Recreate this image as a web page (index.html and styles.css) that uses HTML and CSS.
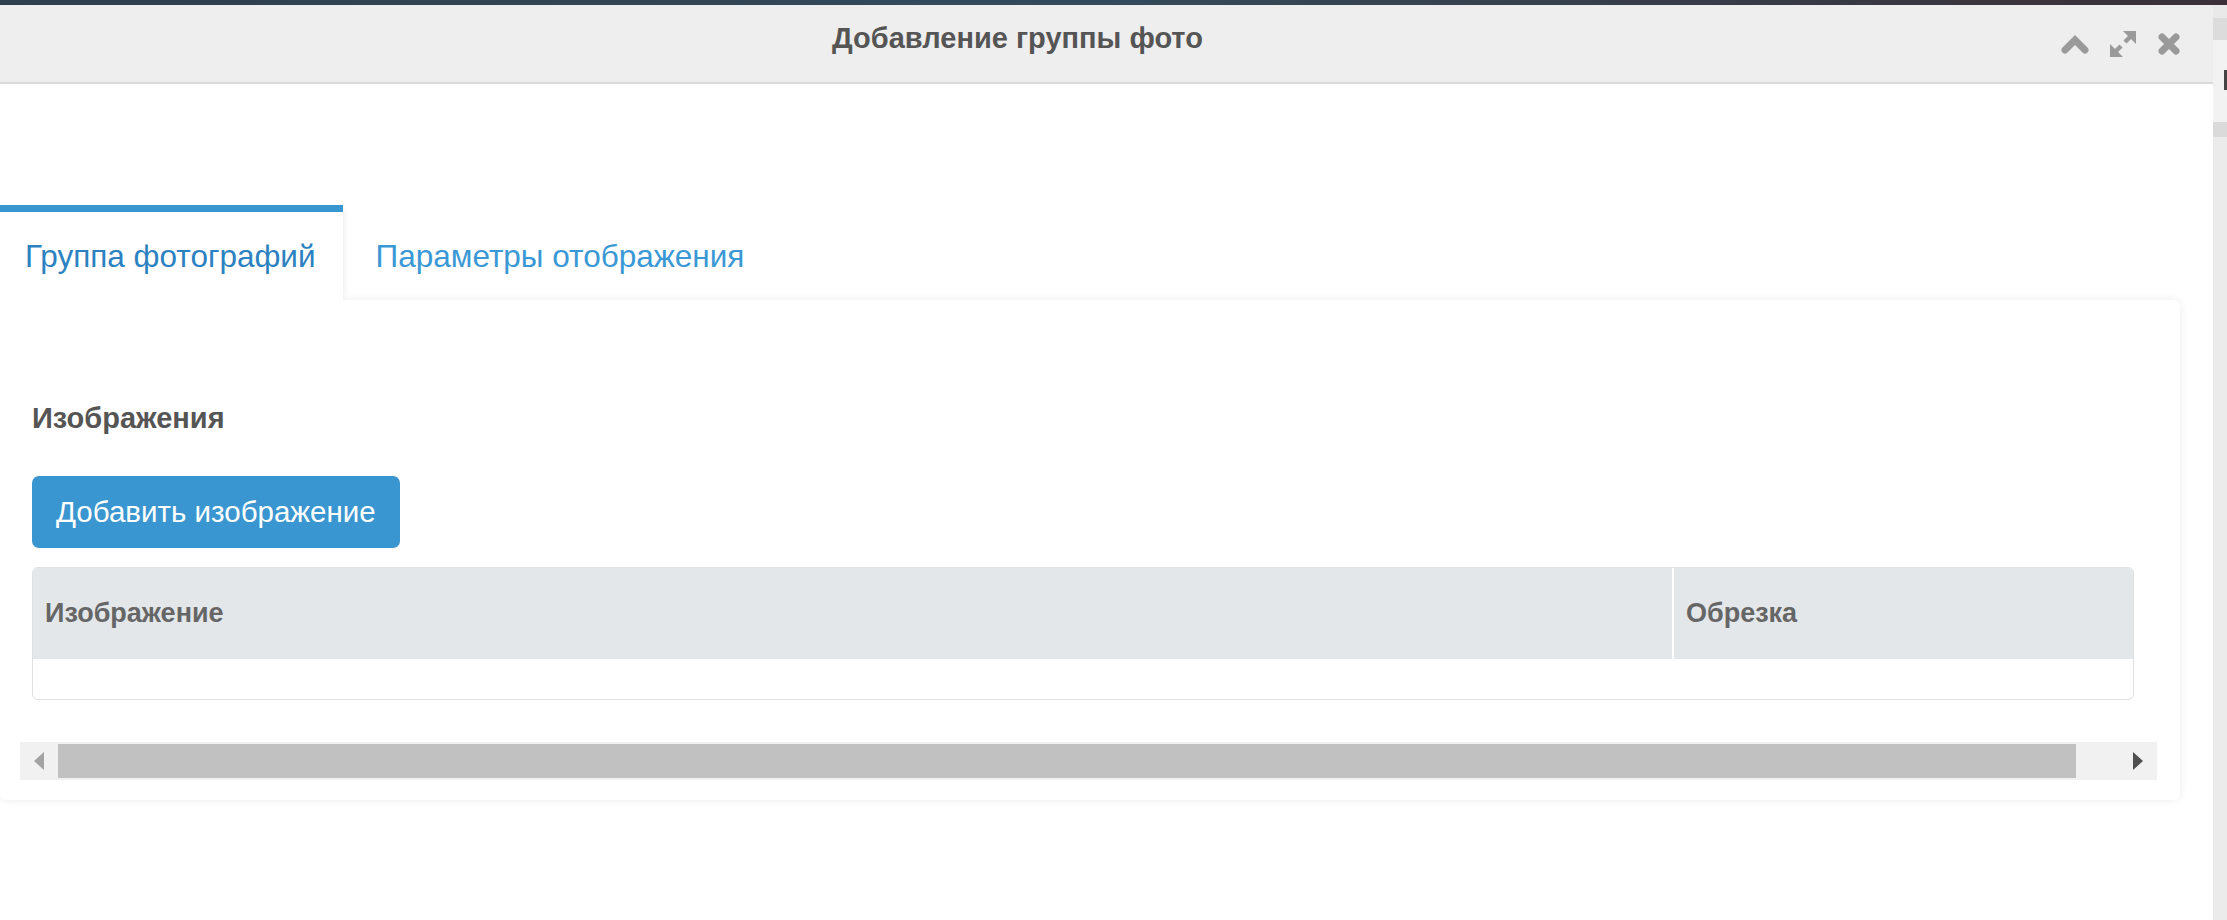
FILE: index.html
```html
<!DOCTYPE html>
<html lang="ru">
<head>
  <meta charset="UTF-8">
  <meta name="viewport" content="width=device-width, initial-scale=1.0">
  <title>Добавление группы фото</title>
  <link rel="stylesheet" href="styles.css">
</head>
<body>

  <div class="topbar"></div>

  <div class="stage">
    <div class="dialog">
      <div class="dialog-header">
        <div class="dialog-title">Добавление группы фото</div>
        <div class="dialog-controls">
          <!-- collapse -->
          <svg class="ctrl" width="28" height="20" viewBox="0 0 28 20">
            <path d="M4 16 L14 6 L24 16" fill="none" stroke="#9a9a9a" stroke-width="7" stroke-linecap="round" stroke-linejoin="miter"/>
          </svg>
          <!-- maximize -->
          <svg class="ctrl" width="28" height="28" viewBox="0 0 28 28">
            <polygon points="14,1 27,1 27,14" fill="#9a9a9a"/>
            <line x1="22" y1="6" x2="16" y2="12" stroke="#9a9a9a" stroke-width="4.5"/>
            <polygon points="1,14 1,27 14,27" fill="#9a9a9a"/>
            <line x1="6" y1="22" x2="12" y2="16" stroke="#9a9a9a" stroke-width="4.5"/>
          </svg>
          <!-- close -->
          <svg class="ctrl" width="24" height="22" viewBox="0 0 24 22">
            <path d="M5 4 L19 18 M19 4 L5 18" fill="none" stroke="#9a9a9a" stroke-width="7" stroke-linecap="round"/>
          </svg>
        </div>
      </div>

      <div class="dialog-body">
        <ul class="tabs">
          <li class="tab active">Группа фотографий</li>
          <li class="tab">Параметры отображения</li>
        </ul>

        <div class="tab-panel">
          <div class="panel-inner">
            <h3 class="section-title">Изображения</h3>
            <button class="btn-add">Добавить изображение</button>

            <div class="table-wrap">
              <table class="images-table">
                <colgroup>
                  <col class="col-image">
                  <col>
                </colgroup>
                <thead>
                  <tr>
                    <th>Изображение</th>
                    <th>Обрезка</th>
                  </tr>
                </thead>
                <tbody>
                  <tr>
                    <td></td>
                    <td></td>
                  </tr>
                </tbody>
              </table>
            </div>
          </div>

          <div class="hscroll">
            <span class="hscroll-btn"><i class="arrow-left"></i></span>
            <span class="hscroll-track"><span class="hscroll-thumb"></span></span>
            <span class="hscroll-btn"><i class="arrow-right"></i></span>
          </div>
        </div>
      </div>
    </div>

    <div class="page-edge">
      <div class="edge-band edge-a"></div>
      <div class="edge-band edge-b"></div>
      <div class="edge-band edge-c"><span class="edge-mark"></span></div>
      <div class="edge-band edge-d"></div>
    </div>
  </div>

</body>
</html>
```

FILE: styles.css
```css
body {
  margin: 0;
  height: 920px;
  overflow: hidden;
  font-family: "Liberation Sans", Arial, sans-serif;
  background: #ebebeb;
}

.topbar {
  height: 5px;
  background: linear-gradient(90deg, #2e3f4f 0%, #344a5a 50%, #3b3038 100%);
}

.stage {
  display: flex;
  height: 915px;
}

/* modal window */
.dialog {
  width: 2213px;
  flex: none;
  display: flex;
  flex-direction: column;
  background: #fff;
  border-top-right-radius: 7px;
  overflow: hidden;
}

.dialog-header {
  display: flex;
  height: 77px;
  background: #eee;
  border-bottom: 2px solid #dadada;
}

.dialog-title {
  flex: 1;
  padding-top: 17px;
  text-align: center;
  font-size: 29px;
  line-height: 32px;
  font-weight: bold;
  color: #555;
}

.dialog-controls {
  width: 178px;
  box-sizing: border-box;
  display: flex;
  justify-content: flex-end;
  align-items: center;
  gap: 20px;
  padding-right: 32px;
}

.ctrl {
  display: block;
}

.dialog-body {
  padding-top: 121px;
}

/* tabs */
.tabs {
  position: relative;
  z-index: 1;
  display: flex;
  list-style: none;
  margin: 0;
  padding: 0;
}

.tab {
  display: flex;
  align-items: center;
  height: 88px;
  padding: 0 33px;
  border-top: 7px solid transparent;
  font-size: 31.5px;
  color: #3a98d5;
}

.tab.active {
  padding: 0 27px 0 25px;
  background: #fff;
  border-top-color: #3a96d0;
  color: #2c82c1;
  box-shadow: 4px 0 6px -3px rgba(0, 0, 0, 0.08);
}

.tab-panel {
  margin-right: 33px;
  padding: 102px 23px 20px 20px;
  background: #fff;
  border-radius: 0 6px 6px 6px;
  box-shadow: 0 0 9px rgba(0, 0, 0, 0.08);
}

.panel-inner {
  padding: 0 23px 0 12px;
}

.section-title {
  margin: 0;
  font-size: 29px;
  line-height: 32px;
  font-weight: bold;
  color: #555;
}

.btn-add {
  display: block;
  height: 72px;
  margin-top: 42px;
  padding: 0 24px;
  font-family: "Liberation Sans", Arial, sans-serif;
  font-size: 29.5px;
  color: #fff;
  background: #3a96d0;
  border: none;
  border-radius: 7px;
}

/* images table */
.table-wrap {
  margin-top: 19px;
  border: 1px solid #dde1e4;
  border-radius: 6px;
  overflow: hidden;
}

.images-table {
  width: 100%;
  table-layout: fixed;
  border-collapse: separate;
  border-spacing: 0;
}

.col-image {
  width: 1641px;
}

.images-table th {
  height: 91px;
  padding: 0 12px;
  text-align: left;
  font-size: 27px;
  font-weight: bold;
  color: #666;
  background: #e3e7ea;
}

.images-table th:first-child {
  border-right: 2px solid #fff;
}

.images-table td {
  height: 40px;
  padding: 0;
}

/* horizontal scrollbar under the table */
.hscroll {
  display: flex;
  height: 38px;
  margin-top: 42px;
  background: #f1f1f1;
}

.hscroll-btn {
  width: 38px;
  display: flex;
  align-items: center;
  justify-content: center;
}

.hscroll-track {
  flex: 1;
  padding: 2px 0;
}

.hscroll-thumb {
  display: block;
  width: 97.9%;
  height: 34px;
  background: #c1c1c1;
}

.arrow-left {
  width: 0;
  height: 0;
  border-top: 9px solid transparent;
  border-bottom: 9px solid transparent;
  border-right: 10px solid #a3a3a3;
}

.arrow-right {
  width: 0;
  height: 0;
  border-top: 9px solid transparent;
  border-bottom: 9px solid transparent;
  border-left: 10px solid #505050;
}

/* strip of the page behind the modal */
.page-edge {
  flex: 1;
  display: flex;
  flex-direction: column;
}

.edge-a {
  height: 13px;
  background: #e9e9e9;
}

.edge-b {
  height: 22px;
  background: #dcdcdc;
}

.edge-c {
  height: 82px;
  display: flex;
  justify-content: flex-end;
  padding-top: 30px;
  box-sizing: border-box;
  background: #f2f2f2;
}

.edge-mark {
  width: 3px;
  height: 20px;
  background: #444;
}

.edge-d {
  height: 15px;
  background: #dadada;
}
```
